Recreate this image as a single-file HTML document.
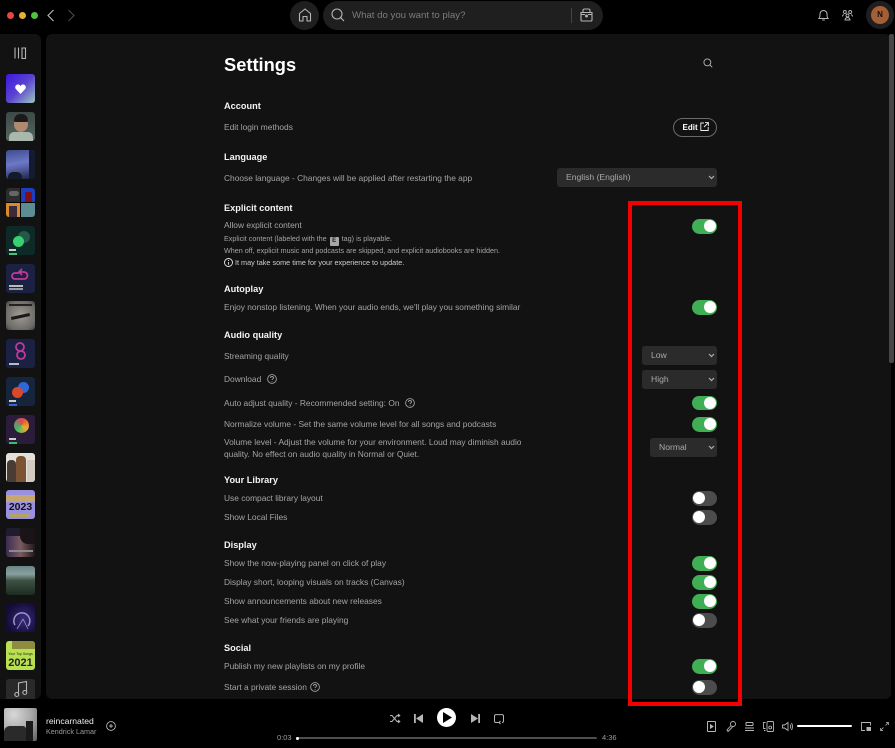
<!DOCTYPE html>
<html><head><meta charset="utf-8">
<style>
html,body{margin:0;padding:0;background:#000;}
#r{position:relative;width:895px;height:748px;overflow:hidden;background:#000;font-family:"Liberation Sans",sans-serif;color:#a7a7a7;}
#w{position:absolute;left:0;top:0;width:895px;height:748px;filter:blur(.35px);}
#r *{box-sizing:border-box;}
.a,.t,.h,.tg,.s,.th{position:absolute;}
.t{font-size:8.4px;line-height:12px;white-space:nowrap;color:#a4a4a4;left:224px;}
.h{font-size:9.2px;line-height:12px;font-weight:bold;color:#f4f4f4;left:224px;white-space:nowrap;}
.tg{left:692px;width:25px;height:14.5px;border-radius:8px;background:#3fae55;}
.tg:after{content:"";position:absolute;top:1.25px;right:1px;width:12px;height:12px;border-radius:50%;background:#fff;}
.tg.off{background:#4c4c4c;}
.tg.off:after{right:auto;left:1px;}
.s{height:19px;background:#2b2b2b;border-radius:3px;font-size:8.6px;line-height:19px;color:#a9a9a9;padding-left:9px;}
.s svg{position:absolute;right:2px;top:6px;}
.th{left:6px;width:29px;height:29px;border-radius:3px;overflow:hidden;}
svg{position:absolute;overflow:visible;}
</style></head><body>
<div id="r">
<div id="w">
<!-- window controls -->
<div class="a" style="left:7px;top:12px;width:7px;height:7px;border-radius:50%;background:#e6483f"></div>
<div class="a" style="left:19px;top:12px;width:7px;height:7px;border-radius:50%;background:#edb02e"></div>
<div class="a" style="left:31px;top:12px;width:7px;height:7px;border-radius:50%;background:#52c13c"></div>
<svg style="left:47px;top:9px" width="8" height="13" viewBox="0 0 8 13" fill="none" stroke="#bdbdbd" stroke-width="1.1"><path d="M6.500 1L1 6.500 6.500 12"/></svg>
<svg style="left:67px;top:9px" width="8" height="13" viewBox="0 0 8 13" fill="none" stroke="#4a4a4a" stroke-width="1.1"><path d="M1.500 1L7 6.500 1.500 12"/></svg>
<!-- home -->
<div class="a" style="left:290px;top:1px;width:29px;height:29px;border-radius:50%;background:#1f1f1f"></div>
<svg style="left:298px;top:8px" width="14" height="14" viewBox="0 0 14 14" fill="none" stroke="#b5b5b5" stroke-width="1.100"><path d="M1.500 13V5.500L7 1l5.500 4.500V13H9V8.500H5V13z" stroke-linejoin="round"/></svg>
<!-- search -->
<div class="a" style="left:323px;top:1px;width:280px;height:29px;border-radius:15px;background:#1f1f1f"></div>
<svg style="left:331px;top:8px" width="14" height="14" viewBox="0 0 14 14" fill="none" stroke="#b5b5b5" stroke-width="1.100"><circle cx="6" cy="6" r="5"/><path d="M9.700 9.700L13 13"/></svg>
<div class="t" style="left:352px;top:10px;font-size:9.650px;color:#7c7c7c">What do you want to play?</div>
<div class="a" style="left:571px;top:8px;width:1px;height:15px;background:#444"></div>
<svg style="left:580px;top:8px" width="13" height="14" viewBox="0 0 13 14" fill="none" stroke="#b5b5b5" stroke-width="1.100"><path d="M3 4V2.500Q3 1 4.500 1h4Q10 1 10 2.500V4M1 4.500h11V12q0 1-1 1H2q-1 0-1-1z"/><circle cx="6.500" cy="8" r=".9" fill="#b5b5b5"/><path d="M1 6.500h4M8 6.500h4"/></svg>
<!-- top right -->
<svg style="left:818px;top:9px" width="11" height="12" viewBox="0 0 11 12" fill="none" stroke="#b5b5b5" stroke-width="1"><path d="M1 9.500c1-1 1-2.500 1-4.500a3.500 3.500 0 0 1 7 0c0 2 0 3.500 1 4.500zM4.200 11h2.600"/></svg>
<svg style="left:842px;top:9px" width="11" height="12" viewBox="0 0 11 12" fill="none" stroke="#b5b5b5" stroke-width=".9"><circle cx="2.800" cy="3" r="1.500"/><circle cx="8.200" cy="3" r="1.500"/><circle cx="5.500" cy="6.500" r="1.500"/><path d="M.5 7.500q0-1.500 1.500-1.800M10.500 7.500q0-1.500-1.500-1.800M3 11q0-2 2.500-2.500Q8 9 8 11z"/></svg>
<div class="a" style="left:866px;top:1px;width:28px;height:28px;border-radius:50%;background:#1f1f1f"></div>
<div class="a" style="left:871px;top:6px;width:18px;height:18px;border-radius:50%;background:#a55f36;color:#111;font-size:8px;font-weight:bold;line-height:18px;text-align:center">N</div>
<!-- panels -->
<div class="a" style="left:0;top:34px;width:41px;height:665px;background:#121212;border-radius:0 6px 6px 0"></div>
<div class="a" style="left:46px;top:34px;width:845px;height:665px;background:#121212;border-radius:6px"></div>
<div class="a" style="left:889px;top:34px;width:5px;height:329px;background:#474747;border-radius:2px"></div>
<!-- library icon -->
<svg style="left:14px;top:47px" width="13" height="12" viewBox="0 0 13 12" fill="none" stroke="#b5b5b5" stroke-width="1.100"><path d="M1 .5v11M4.500 .5v11M8 1h3.500v10.500H8z"/></svg>
<!-- thumbs -->
<div class="th" style="top:74px;background:linear-gradient(135deg,#3d16e0 0%,#5a44d0 50%,#9cc8be 100%)"><svg style="left:9px;top:10px" width="11" height="10" viewBox="0 0 11 10"><path d="M5.500 10L.8 5Q-.5 3 1 1.200 3.500-.8 5.500 2 7.500-.8 10 1.200 11.500 3 10.200 5z" fill="#fff"/></svg></div>
<div class="th" style="top:112px;background:linear-gradient(#3c4a48,#566660)"><div class="a" style="left:8px;top:5px;width:14px;height:15px;border-radius:50%;background:#b08a70"></div><div class="a" style="left:8px;top:2px;width:14px;height:8px;border-radius:7px 7px 2px 2px;background:#1a1a1a"></div><div class="a" style="left:3px;top:20px;width:24px;height:9px;border-radius:5px 5px 0 0;background:#a8b8ac"></div></div>
<div class="th" style="top:150px;background:linear-gradient(170deg,#3e4c8c 0%,#6d78c8 45%,#4a5490 70%,#1a2038 100%)"><div class="a" style="left:23px;top:0;width:6px;height:29px;background:#141a30"></div><div class="a" style="left:2px;top:22px;width:14px;height:7px;background:#141a28;border-radius:5px 5px 0 0"></div></div>
<div class="th" style="top:188px;background:#000"><div class="a" style="left:0;top:0;width:14px;height:14px;background:#2c2c2c"></div><div class="a" style="left:3px;top:3px;width:10px;height:5px;background:#666;border-radius:3px"></div><div class="a" style="left:15px;top:0;width:14px;height:14px;background:#1c3ec0"></div><div class="a" style="left:19px;top:4px;width:7px;height:10px;background:#801018"></div><div class="a" style="left:0;top:15px;width:14px;height:14px;background:#d98a2e"></div><div class="a" style="left:3px;top:18px;width:8px;height:11px;background:#3a2a3a"></div><div class="a" style="left:15px;top:15px;width:14px;height:14px;background:#5c8c94"></div></div>
<div class="th" style="top:226px;background:#0d2a26"><div class="a" style="left:12px;top:5px;width:12px;height:12px;border-radius:50%;background:#24594a"></div><div class="a" style="left:7px;top:10px;width:11px;height:11px;border-radius:50%;background:#38d070"></div><div class="a" style="left:3px;top:23px;width:7px;height:1.500px;background:#ccc"></div><div class="a" style="left:3px;top:27px;width:8px;height:2px;background:#3cc878"></div></div>
<div class="th" style="top:264px;background:#1a2142"><svg style="left:4px;top:5px" width="21" height="14" viewBox="0 0 21 14" fill="none" stroke="#c03a98" stroke-width="1.800"><path d="M9 4H5a3 3 0 0 0 0 6h9a3.500 3.500 0 0 0 0-7h-4M12 0l-3 3 3 3"/></svg><div class="a" style="left:3px;top:21px;width:14px;height:1.500px;background:#bbb"></div><div class="a" style="left:3px;top:24px;width:14px;height:1.500px;background:#999"></div></div>
<div class="th" style="top:301px;background:radial-gradient(circle at 50% 50%,#a09c96 0%,#6c6a66 75%,#3c3c3a 100%)"><div class="a" style="left:5px;top:14px;width:19px;height:3px;background:#1a1a1a;transform:rotate(-12deg)"></div><div class="a" style="left:3px;top:3px;width:23px;height:2px;background:#222"></div></div>
<div class="th" style="top:339px;background:#1a2142"><svg style="left:6px;top:2px" width="16" height="20" viewBox="0 0 16 20" fill="none" stroke="#c03a98" stroke-width="1.800"><circle cx="8" cy="6" r="4"/><circle cx="9" cy="14" r="4"/></svg><div class="a" style="left:3px;top:24px;width:10px;height:1.500px;background:#bbb"></div></div>
<div class="th" style="top:377px;background:#16243c"><div class="a" style="left:12px;top:5px;width:11px;height:11px;border-radius:50%;background:#2f68d8"></div><div class="a" style="left:6px;top:10px;width:11px;height:11px;border-radius:50%;background:#d8492c"></div><div class="a" style="left:3px;top:23px;width:7px;height:1.500px;background:#ccc"></div><div class="a" style="left:3px;top:27px;width:8px;height:2px;background:#2f68d8"></div></div>
<div class="th" style="top:415px;background:#2a1c3a"><div class="a" style="left:8px;top:3px;width:15px;height:15px;border-radius:50%;background:conic-gradient(#e04838,#e8b030,#3cb868,#d84860)"></div><div class="a" style="left:3px;top:23px;width:7px;height:1.500px;background:#ccc"></div><div class="a" style="left:3px;top:27px;width:8px;height:2px;background:#3cb878"></div></div>
<div class="th" style="top:453px;background:#e4e0da"><div class="a" style="left:1px;top:7px;width:9px;height:22px;background:#4a3c34;border-radius:4px 4px 0 0"></div><div class="a" style="left:10px;top:3px;width:10px;height:26px;background:#7c5434;border-radius:4px 4px 0 0"></div><div class="a" style="left:21px;top:7px;width:8px;height:22px;background:#d4cbc0"></div></div>
<div class="th" style="top:490px;background:#9a90e0"><div class="a" style="left:0;top:5px;width:29px;height:7px;background:#d8b040;opacity:.7"></div><div class="a" style="left:0;top:12px;width:29px;font-size:10.500px;line-height:11px;font-weight:bold;color:#111;text-align:center">2023</div><div class="a" style="left:4px;top:24px;width:20px;height:3px;background:#b8a840;opacity:.8"></div></div>
<div class="th" style="top:528px;background:linear-gradient(90deg,#3a2c50,#7a5a60 50%,#201818)"><div class="a" style="left:0;top:0;width:29px;height:8px;background:#201c30"></div><div class="a" style="left:14px;top:0;width:15px;height:16px;background:#1a1418;border-radius:0 0 0 8px"></div><div class="a" style="left:3px;top:22px;width:24px;height:2px;background:#8c8890"></div></div>
<div class="th" style="top:566px;background:linear-gradient(#6c8484 0%,#88a0a0 28%,#3e5244 50%,#1c2a20 100%)"></div>
<div class="th" style="top:603px;background:radial-gradient(circle at 60% 55%,#3a2c78 0%,#241a58 40%,#140c34 75%)"><svg style="left:6px;top:6px" width="20" height="21" viewBox="0 0 20 21" fill="none" stroke="#9c94c8" stroke-width="1.500"><path d="M3 16a8 8 0 1 1 13 1"/><path d="M11 10L5 20M11 10l5 10" stroke-width=".8"/></svg></div>
<div class="th" style="top:641px;background:#b8e050"><div class="a" style="left:6px;top:0;width:23px;height:8px;background:#7c6a38;opacity:.7"></div><div class="a" style="left:0;top:11px;width:29px;font-size:3.500px;line-height:5px;text-align:center;color:#222">Your Top Songs</div><div class="a" style="left:0;top:16px;width:29px;font-size:11px;line-height:12px;font-weight:bold;color:#222;text-align:center">2021</div></div>
<div class="th" style="top:679px;height:20px;background:#2a2a2a;border-radius:3px 3px 0 0"><svg style="left:8px;top:1px" width="14" height="18" viewBox="0 0 14 18" fill="none" stroke="#b5b5b5" stroke-width="1.100"><path d="M4.500 14V3L12.500 1.500V12"/><circle cx="2.800" cy="14.500" r="2"/><circle cx="10.800" cy="12.500" r="2"/></svg></div>

<!-- content -->
<div class="a" style="left:224px;top:52px;font-size:18.300px;line-height:26px;font-weight:bold;color:#fff;white-space:nowrap">Settings</div>
<svg style="left:703px;top:58px" width="10" height="10" viewBox="0 0 11 11" fill="none" stroke="#b5b5b5" stroke-width="1"><circle cx="4.800" cy="4.800" r="3.800"/><path d="M7.600 7.600l2.600 2.600"/></svg>

<div class="h" style="top:100px">Account</div>
<div class="t" style="top:121px">Edit login methods</div>
<div class="a" style="left:673px;top:118px;width:44px;height:19px;border:1px solid #6a6a6a;border-radius:10px;color:#fff;font-size:8px;font-weight:bold;line-height:17px;padding-left:8.500px">Edit</div>
<svg style="left:700px;top:122px" width="9" height="9" viewBox="0 0 9 9" fill="none" stroke="#eee" stroke-width=".9"><path d="M4 1H.8v7.500h7.400V5M5 .6h3.400V4M8.200 .8L4 5"/></svg>

<div class="h" style="top:151px">Language</div>
<div class="t" style="top:172px">Choose language - Changes will be applied after restarting the app</div>
<div class="s" style="left:557px;top:168px;width:160px">English (English)<svg width="7" height="7" viewBox="0 0 7 7" fill="none" stroke="#b0b0b0" stroke-width="1.200"><path d="M1 2l2.500 2.500L6 2"/></svg></div>

<div class="h" style="top:202px">Explicit content</div>
<div class="t" style="top:219px">Allow explicit content</div>
<div class="t" style="top:233px;font-size:7.200px">Explicit content (labeled with the <span style="display:inline-block;width:9px;height:9px;background:#a8a8a8;border-radius:1px;color:#222;font-size:6px;line-height:9px;text-align:center;font-weight:bold;margin:0 1px;vertical-align:-1px">E</span> tag) is playable.</div>
<div class="t" style="top:245px;font-size:7.200px">When off, explicit music and podcasts are skipped, and explicit audiobooks are hidden.</div>
<svg style="left:224px;top:258px" width="9" height="9" viewBox="0 0 9 9" fill="none" stroke="#e8e8e8" stroke-width=".9"><circle cx="4.500" cy="4.500" r="4"/><path d="M4.500 4v2.800M4.500 2v1"/></svg>
<div class="t" style="left:235px;top:257px;font-size:7.250px;color:#cfcfcf">It may take some time for your experience to update.</div>
<div class="tg" style="top:219px"></div>

<div class="h" style="top:283px">Autoplay</div>
<div class="t" style="top:301px">Enjoy nonstop listening. When your audio ends, we'll play you something similar</div>
<div class="tg" style="top:300px"></div>

<div class="h" style="top:329px">Audio quality</div>
<div class="t" style="top:350px">Streaming quality</div>
<div class="s" style="left:642px;top:346px;width:75px">Low<svg width="7" height="7" viewBox="0 0 7 7" fill="none" stroke="#b0b0b0" stroke-width="1.200"><path d="M1 2l2.500 2.500L6 2"/></svg></div>
<div class="t" style="top:373px">Download</div>
<svg style="left:267px;top:374px" width="10" height="10" viewBox="0 0 10 10" fill="none" stroke="#a0a0a0" stroke-width=".9"><circle cx="5" cy="5" r="4.400"/><path d="M3.500 4c0-2 3-2 3 0 0 1-1.500 1-1.500 2M5 7v.8"/></svg>
<div class="s" style="left:642px;top:370px;width:75px">High<svg width="7" height="7" viewBox="0 0 7 7" fill="none" stroke="#b0b0b0" stroke-width="1.200"><path d="M1 2l2.500 2.500L6 2"/></svg></div>
<div class="t" style="top:397px">Auto adjust quality - Recommended setting: On</div>
<svg style="left:405px;top:398px" width="10" height="10" viewBox="0 0 10 10" fill="none" stroke="#a0a0a0" stroke-width=".9"><circle cx="5" cy="5" r="4.400"/><path d="M3.500 4c0-2 3-2 3 0 0 1-1.500 1-1.500 2M5 7v.8"/></svg>
<div class="tg" style="top:395.500px"></div>
<div class="t" style="top:418px">Normalize volume - Set the same volume level for all songs and podcasts</div>
<div class="tg" style="top:417px"></div>
<div class="t" style="top:435.500px">Volume level - Adjust the volume for your environment. Loud may diminish audio</div>
<div class="t" style="top:447.500px">quality. No effect on audio quality in Normal or Quiet.</div>
<div class="s" style="left:650px;top:438px;width:67px">Normal<svg width="7" height="7" viewBox="0 0 7 7" fill="none" stroke="#b0b0b0" stroke-width="1.200"><path d="M1 2l2.500 2.500L6 2"/></svg></div>

<div class="h" style="top:474px">Your Library</div>
<div class="t" style="top:492px">Use compact library layout</div>
<div class="tg off" style="top:491px"></div>
<div class="t" style="top:511px">Show Local Files</div>
<div class="tg off" style="top:510px"></div>

<div class="h" style="top:539px">Display</div>
<div class="t" style="top:557px">Show the now-playing panel on click of play</div>
<div class="tg" style="top:556px"></div>
<div class="t" style="top:576px">Display short, looping visuals on tracks (Canvas)</div>
<div class="tg" style="top:575px"></div>
<div class="t" style="top:595px">Show announcements about new releases</div>
<div class="tg" style="top:594px"></div>
<div class="t" style="top:614px">See what your friends are playing</div>
<div class="tg off" style="top:613px"></div>

<div class="h" style="top:642px">Social</div>
<div class="t" style="top:660px">Publish my new playlists on my profile</div>
<div class="tg" style="top:659px"></div>
<div class="t" style="top:681px">Start a private session</div>
<svg style="left:310px;top:682px" width="10" height="10" viewBox="0 0 10 10" fill="none" stroke="#a0a0a0" stroke-width=".9"><circle cx="5" cy="5" r="4.400"/><path d="M3.500 4c0-2 3-2 3 0 0 1-1.500 1-1.500 2M5 7v.8"/></svg>
<div class="tg off" style="top:680px"></div>

<!-- player -->
<div class="a" style="left:4px;top:708px;width:33px;height:33px;border-radius:2px;background:radial-gradient(circle at 30% 20%,#d8d8d8 0%,#a8a8a8 50%,#606060 100%);overflow:hidden"><div class="a" style="left:0;top:18px;width:22px;height:15px;background:#2a2a2a;border-radius:6px 3px 0 0"></div><div class="a" style="left:22px;top:13px;width:7px;height:20px;background:#1a1a1a"></div></div>
<div class="a" style="left:46px;top:715px;font-size:8.600px;line-height:12px;color:#eee;white-space:nowrap">reincarnated</div>
<div class="a" style="left:46px;top:726px;font-size:7.200px;line-height:12px;color:#9a9a9a;white-space:nowrap">Kendrick Lamar</div>
<svg style="left:106px;top:721px" width="10" height="10" viewBox="0 0 10 10" fill="none" stroke="#b5b5b5" stroke-width=".9"><circle cx="5" cy="5" r="4.400"/><path d="M5 3v4M3 5h4"/></svg>
<svg style="left:390px;top:714px" width="10" height="9" viewBox="0 0 10 9" fill="none" stroke="#b5b5b5" stroke-width="1"><path d="M0 1.500h2L7 7.500h2.500M0 7.500h2L7 1.500h2.500M8 0l1.800 1.500L8 3M8 6l1.800 1.500L8 9"/></svg>
<svg style="left:414px;top:714px" width="9" height="9" viewBox="0 0 9 9" fill="#b5b5b5"><path d="M0 0h1.800v9H0zM9 0v9L2 4.500z"/></svg>
<div class="a" style="left:437px;top:708px;width:19px;height:19px;border-radius:50%;background:#fff"></div>
<svg style="left:443px;top:712px" width="9" height="11" viewBox="0 0 9 11" fill="#000"><path d="M0 0l9 5.500L0 11z"/></svg>
<svg style="left:471px;top:714px" width="9" height="9" viewBox="0 0 9 9" fill="#b5b5b5"><path d="M9 0H7.200v9H9zM0 0v9l7-4.500z"/></svg>
<svg style="left:494px;top:714px" width="10" height="10" viewBox="0 0 10 10" fill="none" stroke="#b5b5b5" stroke-width="1"><path d="M6 8.500H2Q.5 8.500 .5 7V2Q.5 .6 2 .6h6Q9.500 .6 9.500 2v5Q9.500 8.500 8 8.500M6.500 7L5 8.500 6.500 10"/></svg>
<div class="a" style="left:277px;top:733px;font-size:7.500px;line-height:10px;color:#9a9a9a">0:03</div>
<div class="a" style="left:296px;top:737px;width:301px;height:2px;background:#4e4e4e;border-radius:1px"></div>
<div class="a" style="left:296px;top:736.500px;width:3px;height:3px;background:#fff;border-radius:50%"></div>
<div class="a" style="left:602px;top:733px;font-size:7.500px;line-height:10px;color:#9a9a9a">4:36</div>
<svg style="left:707px;top:721px" width="9" height="11" viewBox="0 0 9 11" fill="none" stroke="#b5b5b5" stroke-width="1"><rect x=".5" y=".5" width="8" height="10" rx=".5"/><path d="M3.500 3.800L6 5.500 3.500 7.200z" fill="#b5b5b5"/></svg>
<svg style="left:726px;top:721px" width="10" height="11" viewBox="0 0 10 11" fill="none" stroke="#b5b5b5" stroke-width=".9"><circle cx="7" cy="3" r="2.500"/><path d="M5 4.500L1 9l1 1.500L6.500 6"/></svg>
<svg style="left:745px;top:722px" width="9" height="9" viewBox="0 0 9 9" fill="none" stroke="#b5b5b5" stroke-width="1"><rect x="1" y=".5" width="7" height="3" rx=".5"/><path d="M0 6h9M0 8.500h9"/></svg>
<svg style="left:763px;top:721px" width="11" height="11" viewBox="0 0 11 11" fill="none" stroke="#b5b5b5" stroke-width=".9"><rect x="4" y=".5" width="6.500" height="10" rx="1"/><circle cx="7.200" cy="6.500" r="1.400"/><path d="M2.500 1.500H.5v6h2M1 9.500h1.500"/></svg>
<svg style="left:782px;top:721px" width="11" height="11" viewBox="0 0 11 11" fill="none" stroke="#b5b5b5" stroke-width=".9"><path d="M.5 4v3h2L6 9.500v-8L2.500 4zM8 3.500q1.500 2 0 4M9.500 2q2 3.500 0 7"/></svg>
<div class="a" style="left:797px;top:725px;width:55px;height:2px;background:#fff;border-radius:1px"></div>
<svg style="left:861px;top:722px" width="10" height="9" viewBox="0 0 10 9" fill="none" stroke="#b5b5b5" stroke-width=".9"><path d="M9.500 3.500V.5H.5v8h3.500"/><rect x="5.500" y="5" width="4.500" height="4" fill="#b5b5b5" stroke="none"/></svg>
<svg style="left:880px;top:722px" width="9" height="9" viewBox="0 0 9 9" fill="none" stroke="#999" stroke-width=".9"><path d="M8.500 .5L5.500 3.500M6 .5h2.500V3M.5 8.500l3-3M.5 6v2.500H3"/></svg>
</div>
<!-- red box -->
<div class="a" style="left:628px;top:201px;width:114px;height:505px;border:4px solid #f40000"></div>
</div>
</body></html>
